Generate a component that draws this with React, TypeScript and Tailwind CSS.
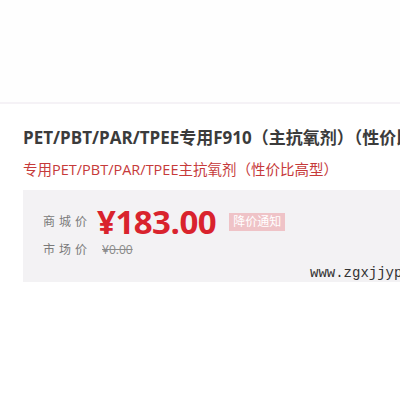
export default function App() {
  return (
    <div className="w-[400px] h-[400px] bg-white overflow-hidden flex flex-col font-['Open_Sans','Noto_Sans_CJK_SC',sans-serif]">
      <div className="h-[102px] shrink-0 bg-[#fefefe]" />
      <div className="h-[2px] shrink-0 bg-[#f5f2f6]" />
      <div className="flex flex-col pl-[23px] pt-[22px]">
        <h1 className="h-[24px] leading-[24px] text-[17px] font-bold text-[#3b3b3b] whitespace-nowrap">
          PET/PBT/PAR/TPEE专用F910（主抗氧剂）（性价比高型）
        </h1>
        <p className="mt-[12px] h-[16px] leading-[16px] text-[14.5px] text-[#c63a3a] whitespace-nowrap">
          专用PET/PBT/PAR/TPEE主抗氧剂（性价比高型）
        </p>
        <div className="mt-[12px] h-[92px] w-[377px] bg-[#f3f2f4] flex flex-col pt-[15px] pl-[20px]">
          <div className="h-[36px] flex items-center">
            <span className="text-[12px] tracking-[4px] text-[#7a7a7a]">商城价</span>
            <span className="ml-[6px] text-[33px] leading-[33px] font-bold text-[#d9232d] tracking-[-0.5px]">¥183.00</span>
            <span className="ml-[13px] h-[18px] px-[4px] leading-[18px] text-[12px] text-white bg-[#efc3c7]">降价通知</span>
          </div>
          <div className="h-[24px] flex items-center">
            <span className="text-[12px] tracking-[4px] text-[#7a7a7a]">市场价</span>
            <span className="ml-[11px] text-[12px] text-[#8a8a8a] line-through">¥0.00</span>
          </div>
          <div className="mt-[3px] h-[18px] pl-[267px] flex items-center whitespace-nowrap">
            <span className="font-['Liberation_Mono',monospace] text-[14px] leading-[18px] text-[#333]">www.zgxjjyp.com</span>
          </div>
        </div>
      </div>
    </div>
  );
}
